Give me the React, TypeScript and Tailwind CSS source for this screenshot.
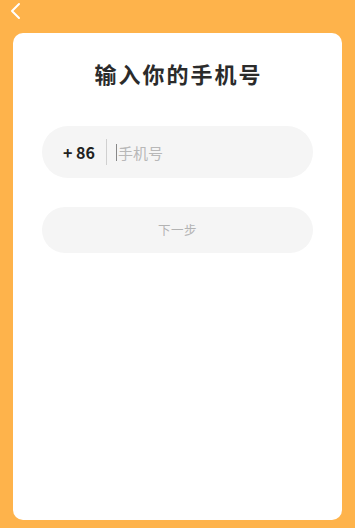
export default function App() {
  return (
    <div
      className="w-[355px] h-[528px] bg-[#feb34b] flex flex-col overflow-hidden"
      style={{ fontFamily: '"Noto Sans CJK SC", "Noto Sans", sans-serif' }}
    >
      <div className="h-[33px] shrink-0 pl-[8px] pt-[2px]">
        <svg width="15" height="18" viewBox="0 0 15 18" fill="none">
          <polyline
            points="11,2 4,9 11,16"
            stroke="#ffffff"
            strokeWidth="2"
            strokeLinecap="round"
            strokeLinejoin="round"
          />
        </svg>
      </div>
      <div className="mx-[13px] h-[487px] bg-white rounded-[10px] flex flex-col pt-[57px] px-[29px]">
        <div className="text-center text-[22px] leading-[30px] font-bold text-[#2b2b2b] tracking-[2px] pl-[2px] -mt-[32px]">
          输入你的手机号
        </div>
        <div className="mt-[38px] h-[52px] rounded-full bg-[#f5f5f5] flex items-center pl-[21px]">
          <span className="text-[16px] font-bold text-[#222] leading-none">+ 86</span>
          <span className="ml-[11px] w-px h-[26px] bg-[#d0d0d0]" />
          <span className="ml-[9px] w-px h-[17px] bg-[#888]" />
          <span className="ml-[1px] text-[15px] text-[#b8b8b8] leading-none">手机号</span>
        </div>
        <div className="mt-[29px] h-[46px] rounded-full bg-[#f5f5f5] flex items-center justify-center">
          <span className="text-[12.5px] text-[#b3b3b3] tracking-[0.5px]">下一步</span>
        </div>
      </div>
    </div>
  );
}
